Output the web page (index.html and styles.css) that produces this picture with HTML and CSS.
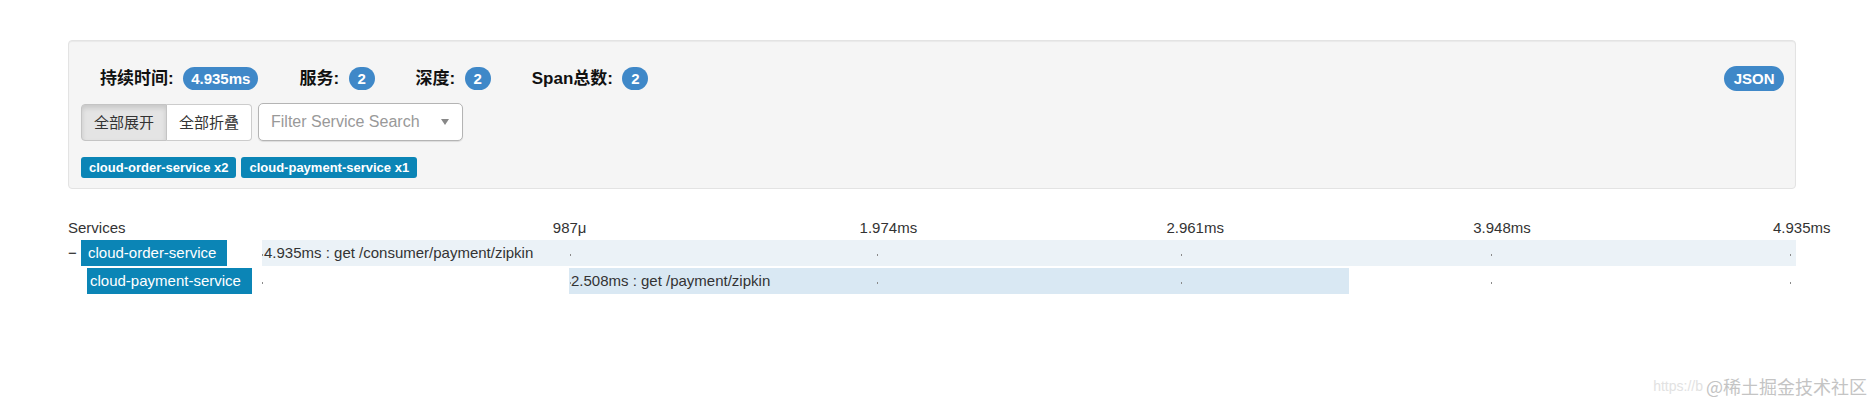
FILE: index.html
```html
<!DOCTYPE html>
<html lang="zh-CN">
<head>
<meta charset="utf-8">
<title>Zipkin Trace</title>
<link rel="stylesheet" href="styles.css">
</head>
<body>
<div class="page">
  <section class="summary">
    <div class="summary-head">
      <ul class="stats">
        <li class="stat"><span class="stat-label">持续时间:</span><span class="badge">4.935ms</span></li>
        <li class="stat"><span class="stat-label">服务:</span><span class="badge">2</span></li>
        <li class="stat"><span class="stat-label">深度:</span><span class="badge">2</span></li>
        <li class="stat"><span class="stat-label">Span总数:</span><span class="badge">2</span></li>
      </ul>
      <span class="badge badge-json">JSON</span>
    </div>
    <div class="controls">
      <div class="btn-group">
        <button class="btn btn-active">全部展开</button>
        <button class="btn">全部折叠</button>
      </div>
      <div class="chosen">
        <span class="chosen-placeholder">Filter Service Search</span>
        <span class="chosen-arrow"></span>
      </div>
    </div>
    <div class="service-tags">
      <span class="tag">cloud-order-service x2</span>
      <span class="tag">cloud-payment-service x1</span>
    </div>
  </section>

  <section class="trace">
    <div class="trace-row trace-header">
      <div class="svc-cell">Services</div>
      <div class="time-cell">
        <span class="tick tick-1">987μ</span>
        <span class="tick tick-2">1.974ms</span>
        <span class="tick tick-3">2.961ms</span>
        <span class="tick tick-4">3.948ms</span>
        <span class="tick tick-5">4.935ms</span>
      </div>
    </div>

    <div class="trace-row">
      <div class="svc-cell">
        <span class="toggle">−</span>
        <span class="svc-name">cloud-order-service</span>
      </div>
      <div class="time-cell">
        <div class="bar bar-root" style="margin-left:0%;width:100%">
          <span class="bar-text">4.935ms : get /consumer/payment/zipkin</span>
        </div>
        <span class="dot dot-0"></span>
        <span class="dot dot-1"></span>
        <span class="dot dot-2"></span>
        <span class="dot dot-3"></span>
        <span class="dot dot-4"></span>
        <span class="dot dot-5"></span>
      </div>
    </div>

    <div class="trace-row">
      <div class="svc-cell svc-child">
        <span class="svc-name">cloud-payment-service</span>
      </div>
      <div class="time-cell">
        <div class="bar bar-child" style="margin-left:20.01%;width:50.82%">
          <span class="bar-text">2.508ms : get /payment/zipkin</span>
        </div>
        <span class="dot dot-0"></span>
        <span class="dot dot-1"></span>
        <span class="dot dot-2"></span>
        <span class="dot dot-3"></span>
        <span class="dot dot-4"></span>
        <span class="dot dot-5"></span>
      </div>
    </div>
  </section>
</div>
<div class="watermark"><span class="wm-url">https://b</span><span class="wm-name">@稀土掘金技术社区</span></div>
</body>
</html>
```

FILE: styles.css
```css
* { box-sizing: border-box; }

html, body {
  margin: 0;
  padding: 0;
  background: #fff;
}

body {
  font-family: "Liberation Sans", "Noto Sans CJK SC", sans-serif;
  font-size: 15px;
  color: #333;
  width: 1875px;
  height: 405px;
  overflow: hidden;
  position: relative;
}

.page {
  width: 1796px;
  padding: 40px 0 0 68px;
}

/* ---------- summary panel ---------- */
.summary {
  background: #f5f5f5;
  border: 1px solid #e3e3e3;
  border-radius: 4px;
  box-shadow: inset 0 1px 1px rgba(0, 0, 0, .05);
  padding: 24px 11px 10px 12px;
}

.summary-head {
  display: flex;
  align-items: center;
  justify-content: space-between;
  height: 27px;
  padding-left: 19px;
}

.stats {
  list-style: none;
  margin: 0;
  padding: 0;
  display: flex;
  align-items: center;
  gap: 41px;
}

.stat {
  display: flex;
  align-items: center;
  gap: 9.5px;
}

.stat-label {
  font-size: 17px;
  font-weight: bold;
  color: #111;
  line-height: 27px;
}

.badge {
  display: inline-block;
  min-width: 26px;
  height: 23px;
  line-height: 23px;
  padding: 0 8px;
  border-radius: 12px;
  background: #3f88c8;
  color: #fff;
  font-size: 15px;
  font-weight: bold;
  text-align: center;
}

.badge-json {
  height: 25px;
  line-height: 25px;
  padding: 0 9.5px;
  border-radius: 13px;
}

.controls {
  display: flex;
  align-items: flex-end;
  margin-top: 11px;
  height: 38px;
}

.btn-group {
  display: flex;
}

.btn {
  height: 37px;
  padding: 0 12px;
  border: 1px solid #ccc;
  background: #fff;
  color: #333;
  font-family: "Liberation Sans", "Noto Sans CJK SC", sans-serif;
  font-size: 15px;
  line-height: 35px;
  margin: 0;
}

.btn:first-child {
  border-radius: 4px 0 0 4px;
}

.btn:last-child {
  border-radius: 0 4px 4px 0;
  border-left: 0;
}

.btn-active {
  background: #e4e4e4;
  border-color: #c4c4c4;
  box-shadow: inset 0 3px 5px rgba(0, 0, 0, .125);
}

.chosen {
  display: flex;
  align-items: center;
  width: 205px;
  height: 38px;
  margin-left: 6px;
  padding: 0 13px 0 12px;
  background: #fff;
  border: 1px solid #b4b4b4;
  border-radius: 5px;
  box-shadow: 0 1px 1px rgba(0, 0, 0, .1);
}

.chosen-placeholder {
  flex: 1;
  font-size: 16px;
  color: #999;
  white-space: nowrap;
}

.chosen-arrow {
  width: 0;
  height: 0;
  border-left: 4px solid transparent;
  border-right: 4px solid transparent;
  border-top: 6px solid #888;
}

.service-tags {
  display: flex;
  gap: 5px;
  margin-top: 16px;
}

.tag {
  display: inline-block;
  height: 21px;
  line-height: 21px;
  padding: 0 8px;
  border-radius: 3px;
  background: #0b85b6;
  color: #fff;
  font-size: 13px;
  font-weight: bold;
  white-space: nowrap;
}

/* ---------- trace timeline ---------- */
.trace {
  margin-top: 26px;
  width: 1728px;
}

.trace-row {
  display: grid;
  grid-template-columns: 194px 1fr;
  height: 26px;
  margin-bottom: 2px;
}

.trace-header {
  height: 25px;
  margin-bottom: 0;
  line-height: 25px;
}

.svc-cell {
  display: flex;
  align-items: center;
  white-space: nowrap;
}

.toggle {
  width: 13px;
  color: #111;
  line-height: 26px;
}

.svc-name {
  height: 26px;
  line-height: 26px;
  padding: 0 11px 0 7px;
  background: #0b85b6;
  color: #fff;
}

.svc-child {
  padding-left: 19px;
}

.svc-child .svc-name {
  padding-left: 3px;
}

.time-cell {
  position: relative;
}

.tick {
  position: absolute;
  top: 0;
  white-space: nowrap;
  line-height: 25px;
}

.tick-1 { left: calc(20% - 16px); }
.tick-2 { left: calc(40% - 16px); }
.tick-3 { left: calc(60% - 16px); }
.tick-4 { left: calc(80% - 16px); }
.tick-5 { left: calc(100% - 23px); }

.bar {
  height: 26px;
  line-height: 26px;
  padding-left: 2px;
  white-space: nowrap;
  overflow: visible;
}

.bar-root {
  background: #ebf2f7;
}

.bar-child {
  background: #d9e8f3;
}

.bar-text {
  color: #333;
}

.dot {
  position: absolute;
  top: 14px;
  width: 1px;
  height: 1.5px;
  background: #8a8a8a;
}

.dot-0 { left: 0; }
.dot-1 { left: calc(20% + 1px); }
.dot-2 { left: calc(40% + 1px); }
.dot-3 { left: calc(60% - 1px); }
.dot-4 { left: calc(80% + 2px); }
.dot-5 { left: calc(100% - 6px); }

/* ---------- watermark ---------- */
.watermark {
  position: absolute;
  right: 8px;
  top: 373px;
  display: flex;
  align-items: center;
  gap: 3px;
  white-space: nowrap;
}

.wm-url {
  font-size: 14px;
  color: #e2e2e2;
}

.wm-name {
  font-size: 18px;
  color: #c4c4c4;
  font-family: "Noto Sans CJK SC", sans-serif;
}
```
